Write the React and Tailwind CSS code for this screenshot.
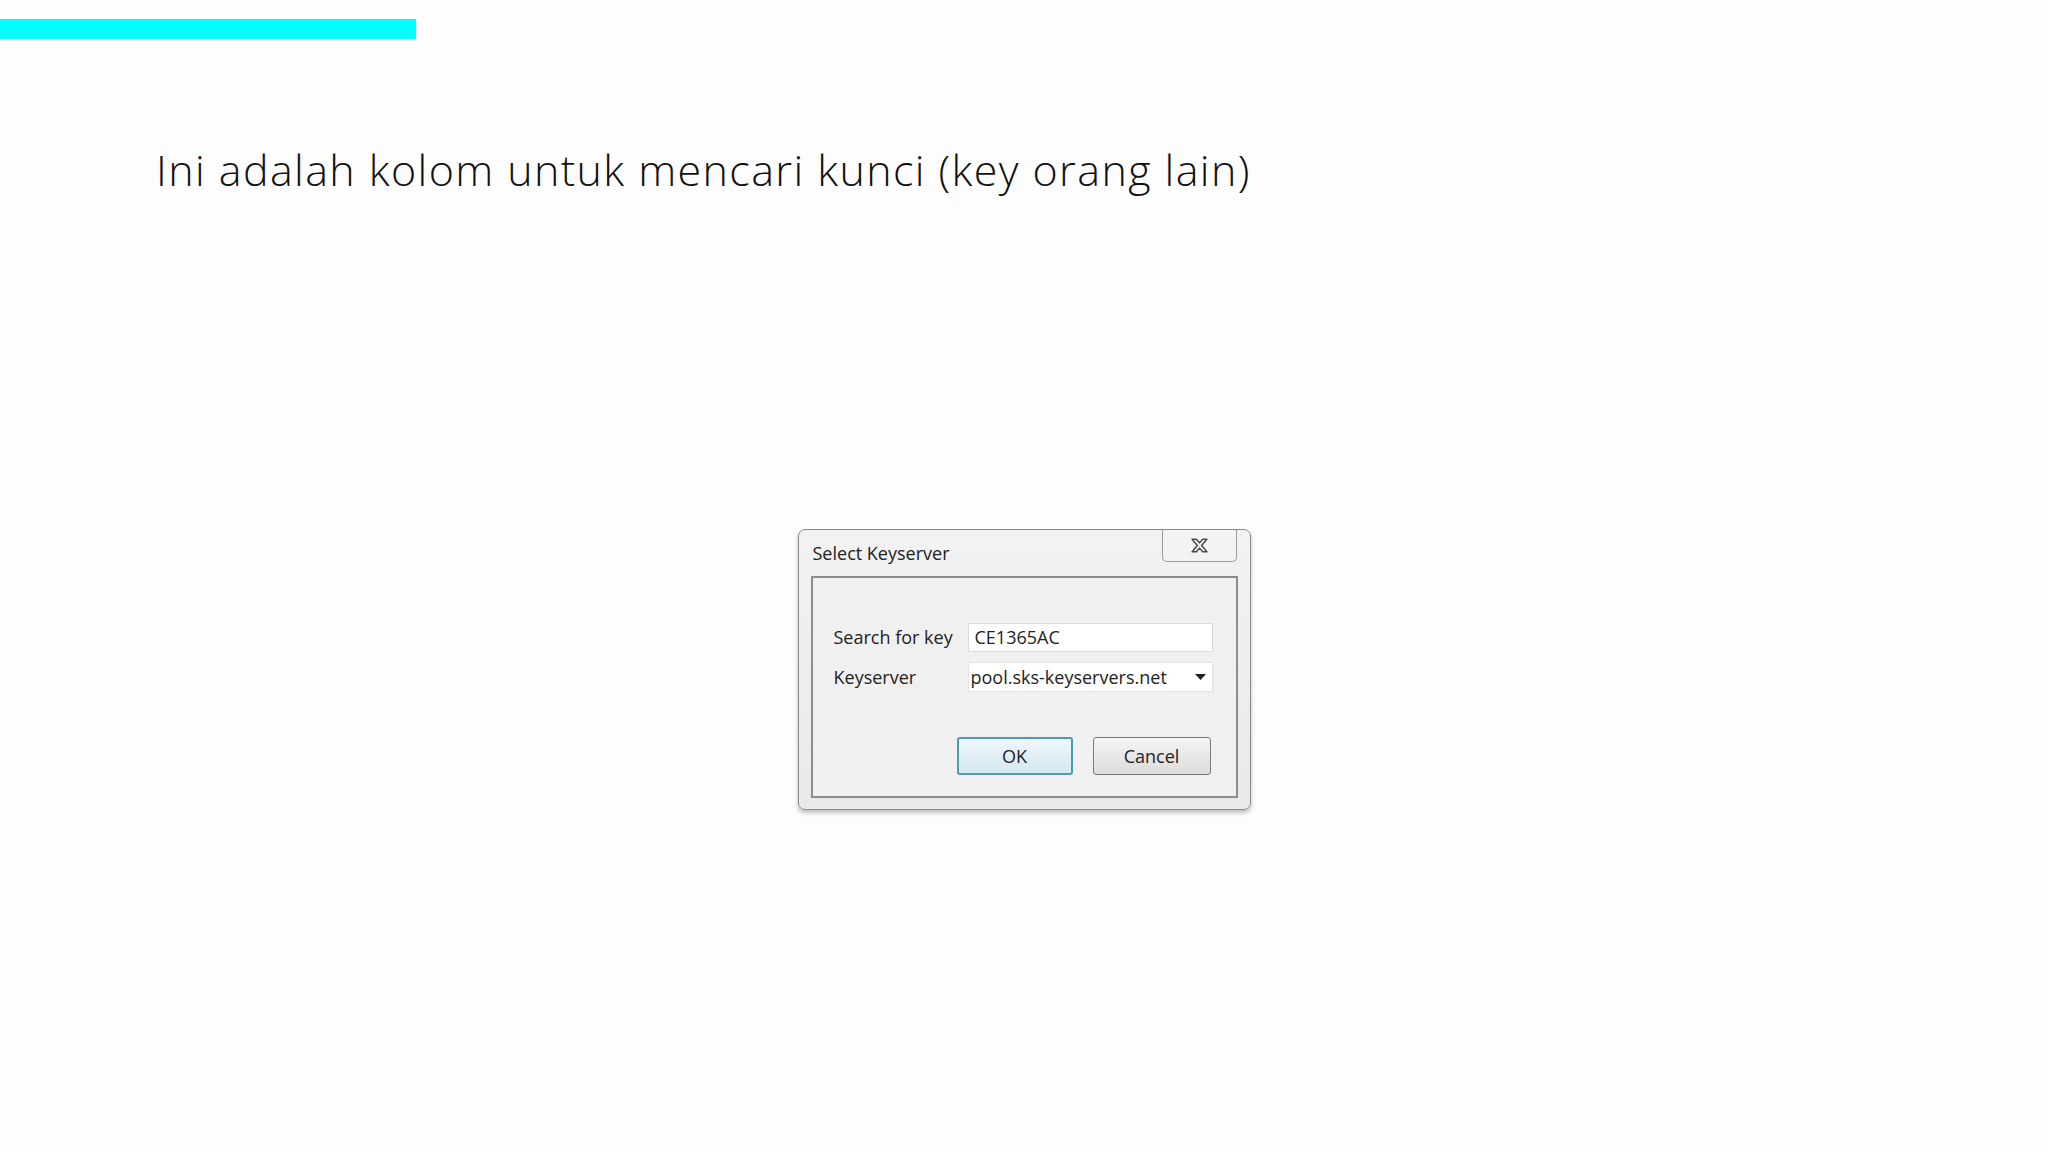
import React from 'react';

const CloseGlyph = () => (
    <svg width="19" height="15" viewBox="0 0 18 14" fill="none">
        <path
            d="M2 1 L6 1 L9 4.5 L12 1 L16 1 L11 7 L16 13 L12 13 L9 9.5 L6 13 L2 13 L7 7 Z"
            fill="#f4f4f4"
            stroke="#4a4a4a"
            strokeWidth="1.4"
            strokeLinejoin="round"
        />
    </svg>
);

const KeyserverDialog = () => (
    <div className="mx-auto w-[453px] h-[281px] rounded-[7px] border border-[#8a8a8a] bg-gradient-to-b from-[#f2f2f2] to-[#e9e9e9] shadow-[0_3px_4px_rgba(0,0,0,0.25)] px-[12px] flex flex-col">
        {/* Title bar */}
        <div className="flex items-start justify-between h-[46px]">
            <span className="pt-[10px] pl-[2px] text-[18px] text-[#222]">Select Keyserver</span>
            <div className="w-[75px] h-[32px] mr-[1px] border border-t-0 border-[#9a9a9a] rounded-b-[5px] bg-[#f3f3f3] flex items-center justify-center">
                <CloseGlyph />
            </div>
        </div>

        {/* Client area */}
        <div className="h-[222px] border-2 border-[#8d8d8d] bg-[#f0f0f0] px-[21px] pt-[45px] text-[18px] text-[#222]">
            <div className="flex items-center h-[29px]">
                <span className="w-[134px]">Search for key</span>
                <div className="w-[245px] h-[29px] bg-white border border-[#dcdcdc] flex items-center pl-[6px]">
                    CE1365AC
                </div>
            </div>
            <div className="flex items-center h-[30px] mt-[10px]">
                <span className="w-[134px]">Keyserver</span>
                <div className="w-[245px] h-[30px] bg-white border border-[#e2e2e2] flex items-center justify-between pl-[2px] pr-[6px]">
                    <span>pool.sks-keyservers.net</span>
                    <svg width="11" height="6" viewBox="0 0 11 6">
                        <path d="M0 0 L11 0 L5.5 6 Z" fill="#222" />
                    </svg>
                </div>
            </div>

            <div className="flex justify-end gap-[20px] mt-[45px] pr-[4px]">
                <button className="w-[116px] h-[38px] rounded-[3px] border-2 border-[#4a9bb5] bg-gradient-to-b from-[#eef7fb] to-[#d5e8f0]">
                    OK
                </button>
                <button className="w-[118px] h-[38px] rounded-[3px] border border-[#7a7a7a] bg-gradient-to-b from-[#f4f4f4] to-[#dcdcdc]">
                    Cancel
                </button>
            </div>
        </div>
    </div>
);

export default function App() {
    return (
        <div className="w-[2048px] h-[1152px] bg-[#fdfdfd] overflow-hidden font-['Open_Sans','Liberation_Sans',sans-serif]">
            <div className="mt-[19px] w-[416px] h-[20px] bg-[#00ffff]" />

            <h1 className="pl-[156px] pt-[109px] h-[191px] text-[43px] leading-[1] font-light tracking-[1.4px] text-[#111]">
                Ini adalah kolom untuk mencari kunci (key orang lain)
            </h1>

            <div className="pt-[299px]">
                <KeyserverDialog />
            </div>
        </div>
    );
}
